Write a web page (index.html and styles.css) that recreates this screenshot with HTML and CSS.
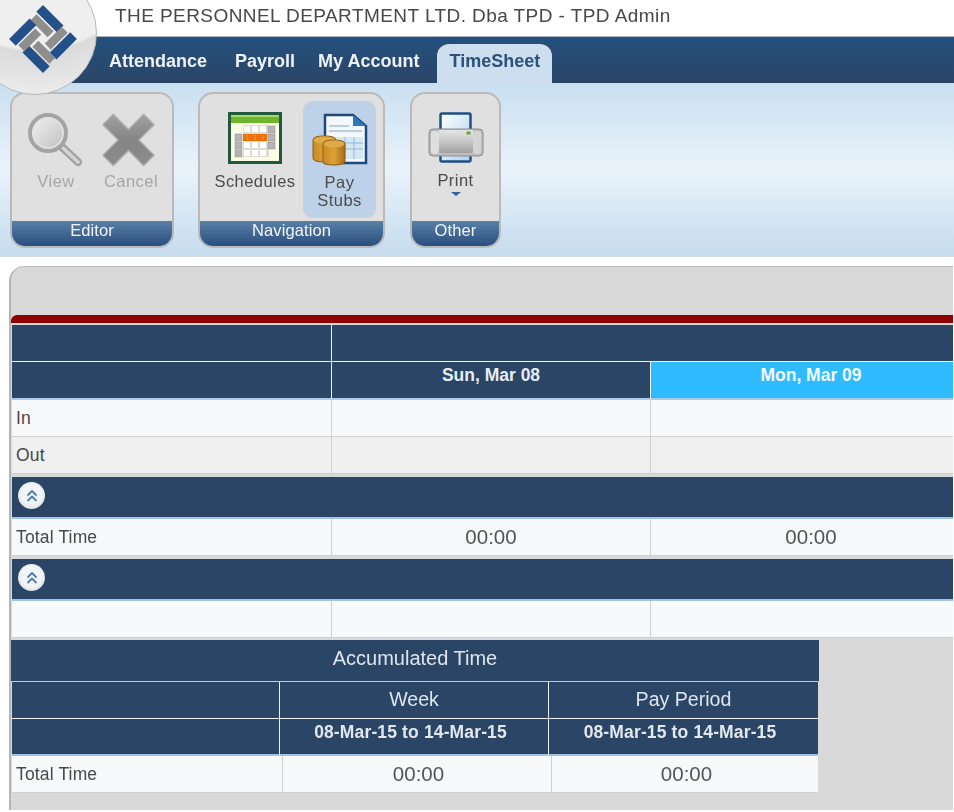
FILE: index.html
```html
<!DOCTYPE html>
<html lang="en">
<head>
<meta charset="utf-8">
<title>TPD Admin</title>
<link rel="stylesheet" href="styles.css">
</head>
<body>
<div class="page">
  <header class="titlebar">THE PERSONNEL DEPARTMENT LTD. Dba TPD - TPD Admin</header>
  <nav class="navbar">
    <a class="tab tab-attendance">Attendance</a>
    <a class="tab tab-payroll">Payroll</a>
    <a class="tab tab-account">My Account</a>
    <a class="tab tab-active">TimeSheet</a>
  </nav>
  <div class="ribbon">
    <section class="group group-editor">
      <div class="group-body">
        <div class="tool tool-view disabled">
          <svg class="icon" width="60" height="60" viewBox="0 0 60 60">
            <defs>
              <linearGradient id="lens" x1="0" y1="0" x2="1" y2="1"><stop offset="0" stop-color="#f4f4f4"/><stop offset="1" stop-color="#bdbdbd"/></linearGradient>
            </defs>
            <path d="M35 36 L51 51" stroke="#a2a2a2" stroke-width="8" stroke-linecap="round"/>
            <path d="M36 37 L51 51" stroke="#d4d4d4" stroke-width="3.500" stroke-linecap="round"/>
            <circle cx="21" cy="22" r="18" fill="url(#lens)" stroke="#a4a4a4" stroke-width="4"/>
            <circle cx="21" cy="22" r="15" fill="none" stroke="#e2e2e2" stroke-width="1.500"/>
          </svg>
          <span>View</span>
        </div>
        <div class="tool tool-cancel disabled">
          <svg class="icon" width="60" height="60" viewBox="0 0 60 60">
            <defs>
              <linearGradient id="cross" x1="0" y1="0" x2="0" y2="1"><stop offset="0" stop-color="#a0a0a0"/><stop offset="0.5" stop-color="#858585"/><stop offset="1" stop-color="#8c8c8c"/></linearGradient>
            </defs>
            <path transform="translate(-1 0.5) scale(0.95)" d="M14 3 L30 19 L46 3 L57 14 L41 30 L57 46 L46 57 L30 41 L14 57 L3 46 L19 30 L3 14 Z" fill="url(#cross)" stroke="#b0b0b0" stroke-width="1.500" stroke-linejoin="round"/>
          </svg>
          <span>Cancel</span>
        </div>
      </div>
      <footer class="group-label">Editor</footer>
    </section>
    <section class="group group-nav">
      <div class="group-body">
        <div class="tool tool-schedules">
          <svg class="icon" width="54" height="52" viewBox="0 0 54 52">
            <rect x="1.500" y="1.500" width="51" height="49" fill="#fdfde6" stroke="#1f5a3a" stroke-width="3"/>
            <rect x="3" y="3" width="48" height="8" fill="#6cb52d"/>
            <rect x="3" y="3" width="48" height="2" fill="#a6d96a"/>
            <rect x="15" y="13" width="26" height="32" fill="#dcdcd4"/>
            <g class="cal-white">
              <rect x="16" y="14" width="6" height="6"/><rect x="24" y="14" width="6" height="6"/><rect x="32" y="14" width="6" height="6"/>
              <rect x="16" y="30" width="6" height="6"/><rect x="24" y="30" width="6" height="6"/><rect x="32" y="30" width="6" height="6"/>
              <rect x="16" y="38" width="6" height="6"/><rect x="24" y="38" width="6" height="6"/><rect x="32" y="38" width="6" height="6"/>
            </g>
            <g class="cal-gray">
              <rect x="40" y="14" width="7" height="7"/><rect x="40" y="22" width="7" height="7"/><rect x="40" y="30" width="7" height="7"/>
              <rect x="7" y="22" width="7" height="7"/><rect x="7" y="30" width="7" height="7"/><rect x="7" y="38" width="7" height="7"/>
            </g>
            <rect x="15" y="22" width="24" height="7" fill="#f07000"/>
            <path d="M19 23 V28 M27 23 V28 M35 23 V28" stroke="#c9a080" stroke-width="1"/>
          </svg>
          <span>Schedules</span>
        </div>
        <div class="tool tool-stubs selected">
          <svg class="icon" width="56" height="56" viewBox="0 0 56 56">
            <defs>
              <linearGradient id="coin" x1="0" y1="0" x2="1" y2="0"><stop offset="0" stop-color="#c98a22"/><stop offset="0.5" stop-color="#dba238"/><stop offset="1" stop-color="#a86c14"/></linearGradient>
            </defs>
            <path d="M13 5 H41 L54 16 V53 H13 Z" fill="#f4f8fd" stroke="#1c4a7c" stroke-width="2.500"/>
            <path d="M41 5 V16 H54 Z" fill="#2e78b8"/>
            <path d="M17 16 H37 M17 21 H50" stroke="#b9cde2" stroke-width="2"/>
            <rect x="24" y="27" width="27" height="22" fill="#d6e8f6"/>
            <path d="M24 33 H51 M24 39 H51 M33 27 V49 M42 27 V49" stroke="#8fb6d8" stroke-width="1"/>
            <path d="M1 30 Q1 26 12 26 Q24 26 24 30 V48 Q24 52 12 52 Q1 52 1 48 Z" fill="url(#coin)" stroke="#8f5c12" stroke-width="1"/>
            <ellipse cx="12.500" cy="30" rx="11" ry="3.500" fill="#e0aa48"/>
            <path d="M11 34 Q11 30 22 30 Q33 30 33 34 V51 Q33 55 22 55 Q11 55 11 51 Z" fill="url(#coin)" stroke="#8f5c12" stroke-width="1"/>
            <ellipse cx="22" cy="34" rx="10.500" ry="3.500" fill="#e0aa48"/>
          </svg>
          <span>Pay<br>Stubs</span>
        </div>
      </div>
      <footer class="group-label">Navigation</footer>
    </section>
    <section class="group group-other">
      <div class="group-body">
        <div class="tool tool-print">
          <svg class="icon" width="56" height="56" viewBox="0 0 56 56">
            <defs>
              <linearGradient id="pbody" x1="0" y1="0" x2="0" y2="1"><stop offset="0" stop-color="#e6e6e6"/><stop offset="0.6" stop-color="#c0c0c0"/><stop offset="1" stop-color="#a0a0a0"/></linearGradient>
              <linearGradient id="ppaper" x1="0" y1="0" x2="1" y2="1"><stop offset="0" stop-color="#ffffff"/><stop offset="1" stop-color="#a9d2f2"/></linearGradient>
            </defs>
            <rect x="12.500" y="1.500" width="30" height="48" rx="1.500" fill="url(#ppaper)" stroke="#1d4f86" stroke-width="2.500"/>
            <rect x="1" y="17" width="54" height="27" rx="4" fill="#bdbdbd" stroke="#8b8b8b"/>
            <rect x="3" y="19" width="8" height="23" rx="3" fill="#dedede"/>
            <rect x="45" y="19" width="8" height="23" rx="3" fill="#d4d4d4"/>
            <path d="M11 18 H45 V38 Q45 41 42 41 H14 Q11 41 11 38 Z" fill="url(#pbody)"/>
            <rect x="38.500" y="19.500" width="4" height="3" fill="#5dab35"/>
          </svg>
          <span>Print</span>
          <i class="caret"></i>
        </div>
      </div>
      <footer class="group-label">Other</footer>
    </section>
  </div>
  <div class="logo">
    <svg width="68" height="68" viewBox="-34 -34 68 68">
      <g transform="rotate(45)">
        <g>
          <rect x="-24" y="-24" width="29" height="9.500" fill="#24508a"/>
          <rect x="-22" y="-13" width="24" height="8.500" fill="#8e8e8e"/>
        </g>
        <g transform="rotate(90)">
          <rect x="-24" y="-24" width="29" height="9.500" fill="#24508a"/>
          <rect x="-22" y="-13" width="24" height="8.500" fill="#8e8e8e"/>
        </g>
        <g transform="rotate(180)">
          <rect x="-24" y="-24" width="29" height="9.500" fill="#24508a"/>
          <rect x="-22" y="-13" width="24" height="8.500" fill="#8e8e8e"/>
        </g>
        <g transform="rotate(270)">
          <rect x="-24" y="-24" width="29" height="9.500" fill="#24508a"/>
          <rect x="-22" y="-13" width="24" height="8.500" fill="#8e8e8e"/>
        </g>
      </g>
    </svg>
  </div>
  <main class="panel">
    <div class="redbar"></div>
    <div class="sheet">
      <div class="row head head-top"><div class="cell"></div><div class="cell span2"></div></div>
      <div class="row head head-days"><div class="cell"></div><div class="cell day">Sun, Mar 08</div><div class="cell day today">Mon, Mar 09</div></div>
      <div class="row data"><div class="cell label">In</div><div class="cell"></div><div class="cell"></div></div>
      <div class="row data alt"><div class="cell label">Out</div><div class="cell"></div><div class="cell"></div></div>
      <div class="band"><span class="collapse"><svg width="14" height="14" viewBox="0 0 14 14"><path d="M2.500 6.500 L7 2 L11.500 6.500 M2.500 12 L7 7.500 L11.500 12" fill="none" stroke="#4a7bb0" stroke-width="1.800"/></svg></span></div>
      <div class="row data"><div class="cell label">Total Time</div><div class="cell time">00:00</div><div class="cell time">00:00</div></div>
      <div class="band"><span class="collapse"><svg width="14" height="14" viewBox="0 0 14 14"><path d="M2.500 6.500 L7 2 L11.500 6.500 M2.500 12 L7 7.500 L11.500 12" fill="none" stroke="#4a7bb0" stroke-width="1.800"/></svg></span></div>
      <div class="row data"><div class="cell label"></div><div class="cell"></div><div class="cell"></div></div>
    </div>
    <div class="accum">
      <div class="accum-title">Accumulated Time</div>
      <div class="row head accum-cols"><div class="cell"></div><div class="cell period">Week</div><div class="cell period">Pay Period</div></div>
      <div class="row head accum-cols accum-dates"><div class="cell"></div><div class="cell range">08-Mar-15 to 14-Mar-15</div><div class="cell range">08-Mar-15 to 14-Mar-15</div></div>
      <div class="row data accum-data"><div class="cell label">Total Time</div><div class="cell time">00:00</div><div class="cell time">00:00</div></div>
    </div>
  </main>
</div>
</body>
</html>
```
FILE: styles.css
```css
* { box-sizing: border-box; }
html, body { margin: 0; padding: 0; background: #fff; }
body { font-family: "Liberation Sans", Arial, sans-serif; color: #444; overflow: hidden; }
.page { position: relative; width: 954px; height: 812px; overflow: hidden; filter: blur(0.35px); }

.titlebar { height: 36px; padding: 5px 0 0 115px; font-size: 19px; line-height: 21px; letter-spacing: 0.43px; color: #484848; white-space: nowrap; }

.navbar { height: 47px; display: flex; align-items: flex-end; border-top: 1px solid #a9b4bf; background: linear-gradient(#24507f, #2b4565); }
.tab { display: block; height: 39px; padding-top: 7px; font-size: 18px; line-height: 21px; font-weight: bold; color: #eef3f8; white-space: nowrap; }
.tab-attendance { margin-left: 109px; }
.tab-payroll { margin-left: 28px; }
.tab-account { margin-left: 23px; }
.tab-active { margin-left: 18px; width: 115px; padding-top: 7px; text-align: center; color: #2c517c; background: #cddfee; border-radius: 12px 12px 0 0; }

.ribbon { height: 174px; padding: 9px 0 0 10px; display: flex; align-items: flex-start; background: linear-gradient(#c9dff0, #e9f3fb 50%, #c6dcee); border-bottom: 2px solid #d4dade; }
.group { height: 156px; display: flex; flex-direction: column; border: 2px solid #bababa; border-radius: 15px; background: #e0e0e0; overflow: hidden; }
.group-editor { width: 164px; }
.group-nav { width: 187px; margin-left: 24px; }
.group-other { width: 91px; margin-left: 25px; }
.group-body { flex: 1; display: flex; min-height: 0; }
.group-label { height: 25px; padding-top: 0; text-align: center; font-size: 16.500px; line-height: 18px; color: #f2f5f8; letter-spacing: 0.1px; background: linear-gradient(#5a7fa8, #2a4f7e); }

.tool { display: flex; flex-direction: column; align-items: center; font-size: 16.500px; line-height: 18px; letter-spacing: 0.45px; color: #4c4c4c; text-align: center; }
.tool span { display: block; }
.disabled { color: #a6a6a6; }
.tool-view { width: 60px; margin: 17px 0 0 15px; }
.tool-view span { margin: 1px 0 0 -2px; }
.tool-cancel { width: 60px; margin: 17px 0 0 14px; }
.tool-cancel span { margin-top: 1px; }
.tool-schedules { width: 84px; margin: 18px 0 0 13px; }
.tool-schedules .icon { margin-bottom: 8px; }
.tool-stubs { width: 73px; height: 117px; margin: 7px 0 0 6px; padding-top: 8px; background: #bdd1e9; border: 1px solid #d0d0d0; border-radius: 9px; }
.tool-stubs .icon { margin-bottom: 7px; }
.tool-print { width: 87px; padding-top: 18px; }
.tool-print .icon { margin-bottom: 3px; }
.caret { display: block; width: 0; height: 0; margin-top: 3px; border: 5px solid transparent; border-top: 4px solid #34639c; border-bottom: 0; }
.cal-white rect { fill: #fff; }
.cal-gray rect { fill: #b4b4b4; stroke: #8e8e8e; stroke-width: 0.5; }

.logo { position: absolute; left: -27px; top: -29px; width: 124px; height: 124px; display: flex; border-radius: 50%; background: radial-gradient(circle at 50% -35%, #efefef 68%, #dadada 70%, #f0f0f0 100%); border: 1px solid #b7b7b7; }
.logo svg { position: absolute; left: 35px; top: 33px; }

.panel { position: absolute; left: 9px; top: 266px; width: 944px; height: 544px; padding: 48px 0 0 0; border-top: 1px solid #bdbdbd; border-left: 2px solid #b5b5b5; border-top-left-radius: 15px; background: #d9d9d9; overflow: hidden; }
.redbar { height: 8px; background: #8f0000; border-top-left-radius: 6px; }
.sheet { margin: 2px 0 0 1px; width: 959px; }
.row { display: grid; grid-template-columns: 320px 319px 320px; }
.cell { min-width: 0; border-right: 1px solid #d0d0d0; border-bottom: 1px solid #d0d0d0; white-space: nowrap; }
.cell:last-child { border-right: 0; }
.head { background: #2a4565; color: #f0f3f7; }
.head .cell { border-color: #f0f3f5; }
.span2 { grid-column: span 2; }
.head-top { height: 37px; }
.head-days { height: 38px; }
.head-days .cell { border-bottom: 2px solid #a8cbe8; }
.day { padding-top: 4px; text-align: center; font-size: 17.500px; line-height: 19px; font-weight: bold; color: #e8edf3; }
.head-days .today { background: #2ebcff; color: #f4faff; }
.data { height: 37px; background: #f8f9fb; }
.alt { background: #f0f0f0; }
.label { padding: 8px 0 0 4px; font-size: 17.500px; line-height: 20px; color: #484848; letter-spacing: 0.15px; }
.time { padding-top: 7px; text-align: center; font-size: 20.500px; line-height: 22px; color: #555; }
.band { height: 42px; margin-top: 3px; padding: 5px 0 0 6px; background: #2a4565; border-bottom: 2px solid #a0c4e6; }
.collapse { display: flex; width: 27px; height: 27px; align-items: center; justify-content: center; border-radius: 50%; background: radial-gradient(circle at 50% 45%, #f2f4f7 50%, #c6ced6 100%); }

.accum { width: 808px; margin-top: 2px; }
.accum-title { height: 42px; padding-top: 8px; text-align: center; font-size: 20px; line-height: 21px; color: #dfe5ec; background: #2a4565; border-bottom: 1px solid #c8c8c8; }
.accum .row { margin-left: 1px; width: 806px; grid-template-columns: 268px 269px 269px; }
.accum-cols { height: 37px; }
.accum-dates { height: 37px; }
.accum-dates .cell { border-bottom: 2px solid #a0c4e6; }
.accum-data { height: 37px; }
.accum .accum-data { grid-template-columns: 271px 269px 266px; }
.accum-data .time { padding-left: 3px; }
.period { padding-top: 6px; text-align: center; font-size: 19.600px; line-height: 22px; color: #dfe5ec; }
.range { padding: 4px 7px 0 0; text-align: center; font-size: 17.500px; line-height: 19px; font-weight: bold; letter-spacing: 0.14px; color: #e2e8ee; }
```
